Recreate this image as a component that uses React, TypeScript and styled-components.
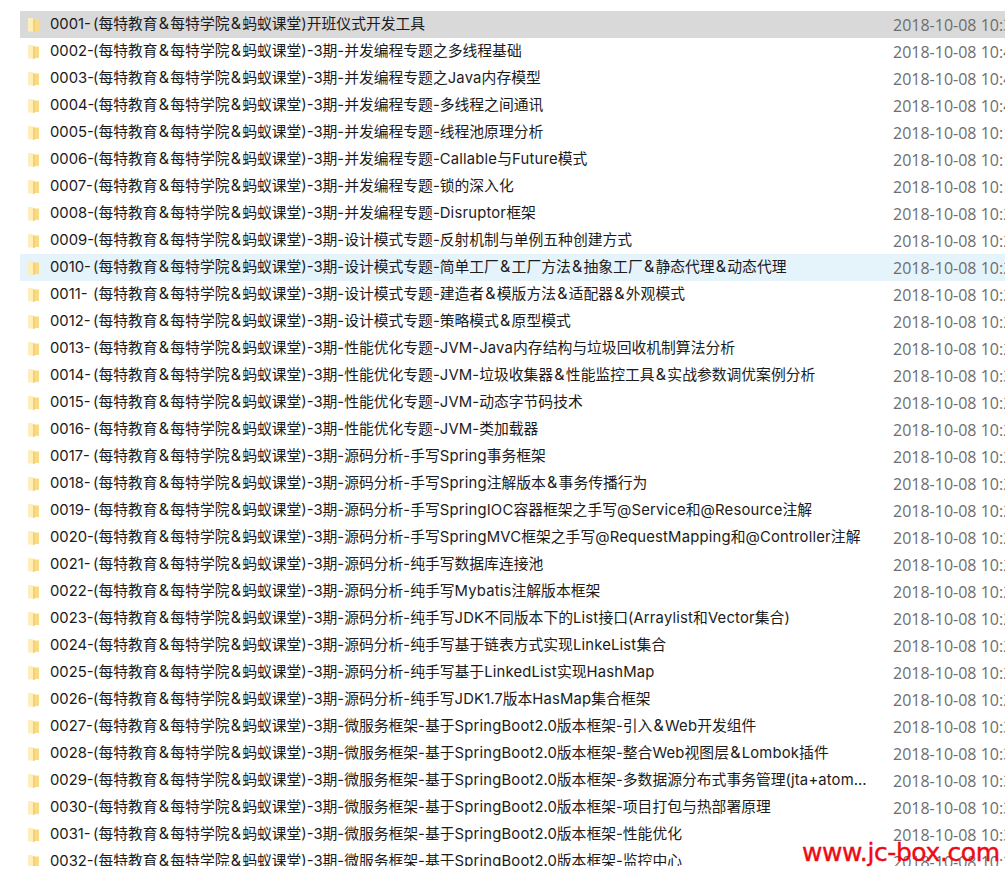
import styled, { createGlobalStyle } from 'styled-components';

const GlobalStyle = createGlobalStyle`
  html, body {
    margin: 0;
    padding: 0;
    background: #fff;
    overflow: hidden;
  }
`;

const Page = styled.div`
  position: relative;
  width: 1005px;
  height: 876px;
  overflow: hidden;
  background: #fff;
  font-family: "Open Sans", "Noto Sans CJK SC", sans-serif;
`;

const List = styled.ul`
  list-style: none;
  margin: 0;
  padding: 11px 0 0 20px;
  height: 855px;
  overflow: hidden;
`;

const Row = styled.li<{ $state?: 'selected' | 'hover' }>`
  display: flex;
  align-items: center;
  height: 27px;
  background: ${({ $state }) =>
    $state === 'selected' ? '#d9d9d9' : $state === 'hover' ? '#e5f3fb' : 'transparent'};
`;

const FolderIcon = styled.svg`
  flex: none;
  width: 16px;
  height: 16px;
  margin: 0 0 0 6px;
`;

const Name = styled.span`
  flex: none;
  width: 843px;
  margin: 0 0 1px 8px;
  color: #1b1b1b;
  font-family: Inter, "Noto Sans CJK SC", sans-serif;
  font-size: 14.8px;
  line-height: 22px;
  white-space: nowrap;
  overflow: hidden;
`;

const Index = styled.span`
  display: inline-block;
  width: 43px;
`;

/* the ampersand and latin words run wider in the reference than Inter sets them */
const Amp = styled.span`
  margin: 0 1.2px;
  font-size: 16px;
  line-height: 1;
`;

const Latin = styled.span`
  letter-spacing: 0.2px;
`;

const Modified = styled.span`
  flex: none;
  width: 112px;
  color: #6d6d6d;
  font-size: 16px;
  line-height: 22px;
  white-space: nowrap;
  overflow: hidden;
`;

const Watermark = styled.div`
  position: absolute;
  left: 802px;
  top: 838px;
  color: #ee0a14;
  font-family: "DejaVu Sans", sans-serif;
  font-size: 25px;
  letter-spacing: -0.4px;
  -webkit-text-stroke: 0.4px #ee0a14;
  white-space: nowrap;
`;

const P = '(每特教育&每特学院&蚂蚁课堂)-3期-';

const files: [string, string][] = [
  ['0001-(每特教育&每特学院&蚂蚁课堂)开班仪式开发工具', '3'],
  [`0002-${P}并发编程专题之多线程基础`, '4'],
  [`0003-${P}并发编程专题之Java内存模型`, '4'],
  [`0004-${P}并发编程专题-多线程之间通讯`, '4'],
  [`0005-${P}并发编程专题-线程池原理分析`, '1'],
  [`0006-${P}并发编程专题-Callable与Future模式`, '1'],
  [`0007-${P}并发编程专题-锁的深入化`, '1'],
  [`0008-${P}并发编程专题-Disruptor框架`, '2'],
  [`0009-${P}设计模式专题-反射机制与单例五种创建方式`, '2'],
  [`0010-${P}设计模式专题-简单工厂&工厂方法&抽象工厂&静态代理&动态代理`, '2'],
  [`0011-${P}设计模式专题-建造者&模版方法&适配器&外观模式`, '2'],
  [`0012-${P}设计模式专题-策略模式&原型模式`, '2'],
  [`0013-${P}性能优化专题-JVM-Java内存结构与垃圾回收机制算法分析`, '2'],
  [`0014-${P}性能优化专题-JVM-垃圾收集器&性能监控工具&实战参数调优案例分析`, '3'],
  [`0015-${P}性能优化专题-JVM-动态字节码技术`, '2'],
  [`0016-${P}性能优化专题-JVM-类加载器`, '2'],
  [`0017-${P}源码分析-手写Spring事务框架`, '2'],
  [`0018-${P}源码分析-手写Spring注解版本&事务传播行为`, '2'],
  [`0019-${P}源码分析-手写SpringIOC容器框架之手写@Service和@Resource注解`, '2'],
  [`0020-${P}源码分析-手写SpringMVC框架之手写@RequestMapping和@Controller注解`, '2'],
  [`0021-${P}源码分析-纯手写数据库连接池`, '2'],
  [`0022-${P}源码分析-纯手写Mybatis注解版本框架`, '2'],
  [`0023-${P}源码分析-纯手写JDK不同版本下的List接口(Arraylist和Vector集合)`, '2'],
  [`0024-${P}源码分析-纯手写基于链表方式实现LinkeList集合`, '2'],
  [`0025-${P}源码分析-纯手写基于LinkedList实现HashMap`, '2'],
  [`0026-${P}源码分析-纯手写JDK1.7版本HasMap集合框架`, '2'],
  [`0027-${P}微服务框架-基于SpringBoot2.0版本框架-引入&Web开发组件`, '3'],
  [`0028-${P}微服务框架-基于SpringBoot2.0版本框架-整合Web视图层&Lombok插件`, '3'],
  [`0029-${P}微服务框架-基于SpringBoot2.0版本框架-多数据源分布式事务管理(jta+atom...`, '3'],
  [`0030-${P}微服务框架-基于SpringBoot2.0版本框架-项目打包与热部署原理`, '3'],
  [`0031-${P}微服务框架-基于SpringBoot2.0版本框架-性能优化`, '3'],
  [`0032-${P}微服务框架-基于SpringBoot2.0版本框架-监控中心`, '3'],
];

function Folder() {
  return (
    <FolderIcon viewBox="0 0 16 16" aria-hidden="true">
      <path d="M2 1h4.4L8 2.5V15l-6-.8z" fill="#fdeebb" />
      <path d="M8 2.5h5V14H8z" fill="#fadb85" />
      <path d="M7.2 2 8.6 2.5V15H7.2z" fill="#f6cb5c" />
    </FolderIcon>
  );
}

function FileName({ text }: { text: string }) {
  const parts = text.slice(5).split(/(&|[A-Za-z@]+)/);
  return (
    <Name>
      <Index>{text.slice(0, 5)}</Index>
      {parts.map((part, i) => {
        if (part === '&') return <Amp key={i}>&amp;</Amp>;
        if (i % 2 === 1) return <Latin key={i}>{part}</Latin>;
        return part;
      })}
    </Name>
  );
}

export default function App() {
  return (
    <Page>
      <GlobalStyle />
      <List>
        {files.map(([name, minute], i) => (
          <Row key={name} $state={i === 0 ? 'selected' : i === 9 ? 'hover' : undefined}>
            <Folder />
            <FileName text={name} />
            <Modified>2018-10-08 10:{minute}</Modified>
          </Row>
        ))}
      </List>
      <Watermark>www.jc-box.com</Watermark>
    </Page>
  );
}
